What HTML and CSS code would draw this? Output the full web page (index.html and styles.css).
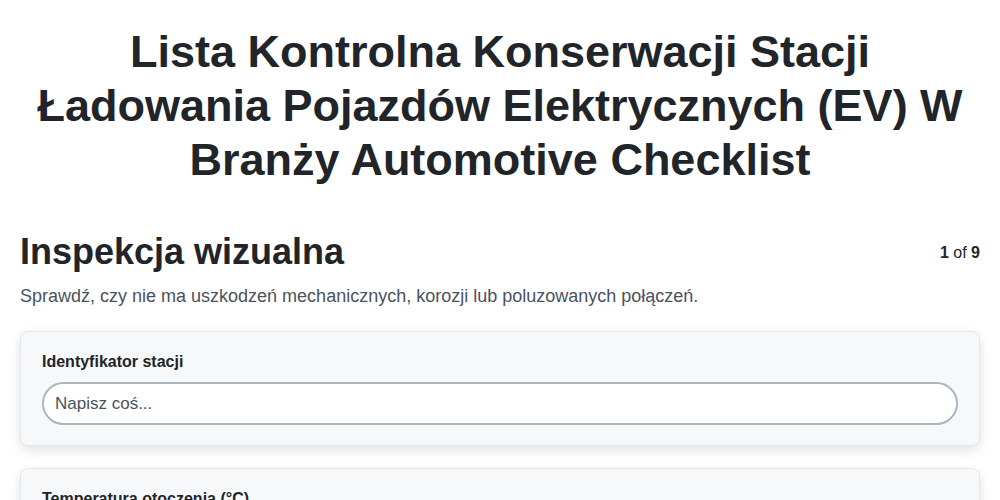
FILE: index.html
```html
<!DOCTYPE html>
<html lang="pl">
<head>
<meta charset="utf-8">
<title>Lista Kontrolna</title>
<link rel="stylesheet" href="styles.css">
</head>
<body>
<main class="page">
  <h1 class="title">Lista Kontrolna Konserwacji Stacji Ładowania Pojazdów Elektrycznych (EV) W Branży Automotive Checklist</h1>
  <section class="step">
    <div class="step-head">
      <h2 class="step-title">Inspekcja wizualna</h2>
      <div class="counter"><b>1</b> of <b>9</b></div>
    </div>
    <p class="step-desc">Sprawdź, czy nie ma uszkodzeń mechanicznych, korozji lub poluzowanych połączeń.</p>
    <div class="card">
      <label class="field-label" for="f1">Identyfikator stacji</label>
      <input class="field-input" id="f1" type="text" placeholder="Napisz coś...">
    </div>
    <div class="card">
      <label class="field-label" for="f2">Temperatura otoczenia (°C)</label>
      <input class="field-input" id="f2" type="text" placeholder="Napisz coś...">
    </div>
  </section>
</main>
</body>
</html>
```
FILE: styles.css
```css
* { box-sizing: border-box; }
html, body { margin: 0; padding: 0; background: #ffffff; }
body {
  font-family: "Liberation Sans", Arial, sans-serif;
  color: #212529;
}
.page {
  padding: 25px 20px 40px;
}
.title {
  margin: 0;
  font-size: 45px;
  line-height: 54px;
  font-weight: 700;
  text-align: center;
  color: #212529;
}
.step { margin-top: 43px; }
.step-head {
  display: flex;
  justify-content: space-between;
  align-items: flex-start;
}
.step-title {
  margin: 0;
  font-size: 36px;
  line-height: 43px;
  font-weight: 700;
}
.counter {
  font-size: 16px;
  padding-top: 14px;
  color: #212529;
}
.step-desc {
  margin: 13px 0 24px;
  font-size: 18px;
  line-height: 21px;
  color: #4a5260;
}
.card {
  background: #f7f8fa;
  border: 1px solid #e5e7eb;
  border-radius: 8px;
  box-shadow: 0 4px 12px rgba(0,0,0,0.12);
  padding: 20px 21px;
  margin-bottom: 22px;
  display: flex;
  flex-direction: column;
}
.field-label {
  font-size: 16px;
  font-weight: 700;
  line-height: 19px;
  margin-bottom: 11px;
}
.field-input {
  height: 43px;
  border: 2px solid #adb5bd;
  border-radius: 22px;
  background: #fff;
  padding: 0 11px;
  font-family: "Liberation Sans", Arial, sans-serif;
  font-size: 17px;
  color: #212529;
  outline: none;
}
.field-input::placeholder { color: #4a5260; opacity: 1; }
```
